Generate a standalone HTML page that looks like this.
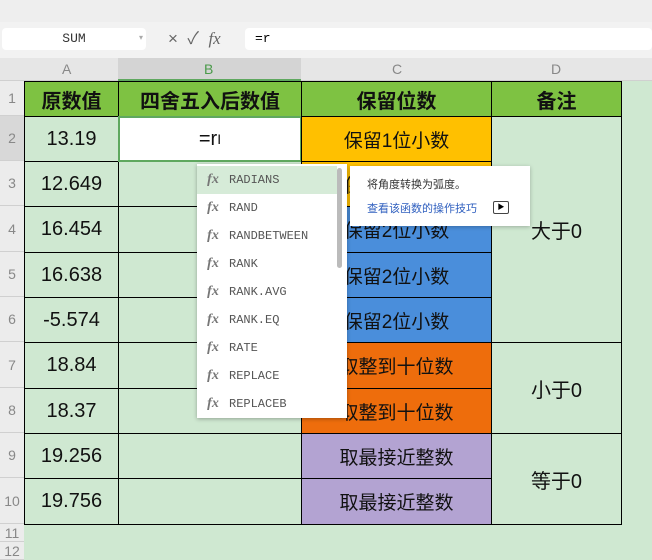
<!DOCTYPE html><html><head><meta charset="utf-8"><style>
body{margin:0;width:652px;height:552px;overflow:hidden;background:#cfe8d1;font-family:"Liberation Sans","Noto Sans CJK SC",sans-serif;position:relative}
div{position:absolute;box-sizing:border-box}
.c{display:flex;align-items:center;justify-content:center;border:1px solid #000;font-size:20px;color:#111}
.h{background:#7ec242;font-weight:bold}
.rh{left:0;width:24px;color:#888;font-size:14px;display:flex;align-items:center;justify-content:center;background:#ececec;border-bottom:1px solid #d0d0d0}
.it{left:0;width:140px;height:28px;display:flex;align-items:center;font-family:"Liberation Mono",monospace;font-size:12px;color:#555}
.it i{font-family:"Liberation Serif",serif;font-weight:bold;color:#777;font-size:14px;width:32px;text-align:center}
</style></head><body>
<div style="left:0;top:0;width:652px;height:22px;background:#eee"></div>
<div style="left:0;top:22px;width:652px;height:36px;background:#f2f2f2"></div>
<div style="left:2px;top:28px;width:144px;height:22px;background:#fff;border-radius:4px;font-family:'Liberation Mono',monospace;font-size:13px;color:#333;text-align:center;line-height:22px">SUM<span style="position:absolute;right:3px;color:#aaa;font-size:8px">▾</span></div>
<div style="left:168px;top:28px;font-size:17px;color:#666;line-height:22px">×&nbsp;&nbsp;✓&nbsp;&nbsp;<i style="font-family:'Liberation Serif',serif">fx</i></div>
<div style="left:245px;top:28px;width:407px;height:22px;background:#fff;border-radius:4px;font-family:'Liberation Mono',monospace;font-size:13px;line-height:22px;padding-left:10px">=r</div>
<div style="left:0;top:58px;width:652px;height:23px;background:#e6e6e6;border-bottom:1px solid #d0d0d0"></div>
<div style="left:118px;top:58px;width:183px;height:23px;background:#d4d4d4;border-bottom:2px solid #5fa85f"></div>
<div style="left:62px;top:58px;color:#888;font-size:14px;line-height:23px">A</div>
<div style="left:204px;top:58px;color:#4a9a4a;font-size:14px;line-height:23px">B</div>
<div style="left:392px;top:58px;color:#888;font-size:14px;line-height:23px">C</div>
<div style="left:551px;top:58px;color:#888;font-size:14px;line-height:23px">D</div>
<div class="rh" style="top:81px;height:35px">1</div>
<div class="rh" style="top:116px;height:45px;background:#d8d8d8">2</div>
<div class="rh" style="top:161px;height:45px">3</div>
<div class="rh" style="top:206px;height:46px">4</div>
<div class="rh" style="top:252px;height:45px">5</div>
<div class="rh" style="top:297px;height:45px">6</div>
<div class="rh" style="top:342px;height:46px">7</div>
<div class="rh" style="top:388px;height:45px">8</div>
<div class="rh" style="top:433px;height:45px">9</div>
<div class="rh" style="top:478px;height:46px">10</div>
<div class="rh" style="top:524px;height:18px">11</div>
<div class="rh" style="top:542px;height:18px">12</div>
<div class="c h" style="left:24px;top:81px;width:95px;height:36px">原数值</div>
<div class="c h" style="left:118px;top:81px;width:184px;height:36px">四舍五入后数值</div>
<div class="c h" style="left:301px;top:81px;width:191px;height:36px">保留位数</div>
<div class="c h" style="left:491px;top:81px;width:131px;height:36px">备注</div>
<div class="c" style="left:24px;top:116px;width:95px;height:46px">13.19</div>
<div class="c" style="left:24px;top:161px;width:95px;height:46px">12.649</div>
<div class="c" style="left:24px;top:206px;width:95px;height:47px">16.454</div>
<div class="c" style="left:24px;top:252px;width:95px;height:46px">16.638</div>
<div class="c" style="left:24px;top:297px;width:95px;height:46px">-5.574</div>
<div class="c" style="left:24px;top:342px;width:95px;height:47px">18.84</div>
<div class="c" style="left:24px;top:388px;width:95px;height:46px">18.37</div>
<div class="c" style="left:24px;top:433px;width:95px;height:46px">19.256</div>
<div class="c" style="left:24px;top:478px;width:95px;height:47px">19.756</div>
<div class="c" style="left:118px;top:161px;width:184px;height:46px"></div>
<div class="c" style="left:118px;top:206px;width:184px;height:47px"></div>
<div class="c" style="left:118px;top:252px;width:184px;height:46px"></div>
<div class="c" style="left:118px;top:297px;width:184px;height:46px"></div>
<div class="c" style="left:118px;top:342px;width:184px;height:47px"></div>
<div class="c" style="left:118px;top:388px;width:184px;height:46px"></div>
<div class="c" style="left:118px;top:433px;width:184px;height:46px"></div>
<div class="c" style="left:118px;top:478px;width:184px;height:47px"></div>
<div class="c" style="left:118px;top:116px;width:184px;height:46px;background:#fff;border:2px solid #5fa85f">=r<span style="font-size:14px">I</span></div>
<div class="c" style="left:301px;top:116px;width:191px;height:46px;background:#ffc000;font-size:19px">保留1位小数</div>
<div class="c" style="left:301px;top:161px;width:191px;height:46px;background:#ffc000;font-size:19px">保留1位小数</div>
<div class="c" style="left:301px;top:206px;width:191px;height:47px;background:#4a8edb;font-size:19px">保留2位小数</div>
<div class="c" style="left:301px;top:252px;width:191px;height:46px;background:#4a8edb;font-size:19px">保留2位小数</div>
<div class="c" style="left:301px;top:297px;width:191px;height:46px;background:#4a8edb;font-size:19px">保留2位小数</div>
<div class="c" style="left:301px;top:342px;width:191px;height:47px;background:#ee6d0c;font-size:19px">取整到十位数</div>
<div class="c" style="left:301px;top:388px;width:191px;height:46px;background:#ee6d0c;font-size:19px">取整到十位数</div>
<div class="c" style="left:301px;top:433px;width:191px;height:46px;background:#b3a3d2;font-size:19px">取最接近整数</div>
<div class="c" style="left:301px;top:478px;width:191px;height:47px;background:#b3a3d2;font-size:19px">取最接近整数</div>
<div class="c" style="left:491px;top:116px;width:131px;height:227px">大于0</div>
<div class="c" style="left:491px;top:342px;width:131px;height:92px">小于0</div>
<div class="c" style="left:491px;top:433px;width:131px;height:92px">等于0</div>
<div style="left:197px;top:164px;width:150px;height:254px;background:#fff;box-shadow:0 1px 4px rgba(0,0,0,.3)">
<div class="it" style="top:2px;background:#d6ebd8"><i>fx</i>RADIANS</div>
<div class="it" style="top:30px"><i>fx</i>RAND</div>
<div class="it" style="top:58px"><i>fx</i>RANDBETWEEN</div>
<div class="it" style="top:86px"><i>fx</i>RANK</div>
<div class="it" style="top:114px"><i>fx</i>RANK.AVG</div>
<div class="it" style="top:142px"><i>fx</i>RANK.EQ</div>
<div class="it" style="top:170px"><i>fx</i>RATE</div>
<div class="it" style="top:198px"><i>fx</i>REPLACE</div>
<div class="it" style="top:226px"><i>fx</i>REPLACEB</div>
<div style="left:140px;top:4px;width:5px;height:100px;background:#bbb;border-radius:3px"></div>
</div>
<div style="left:350px;top:166px;width:180px;height:60px;background:#fff;box-shadow:0 1px 4px rgba(0,0,0,.25)">
<div style="left:17px;top:10px;font-size:11px;color:#333">将角度转换为弧度。</div>
<div style="left:17px;top:34px;font-size:11px;color:#2f5fbf">查看该函数的操作技巧</div>
<div style="left:143px;top:35px;width:16px;height:13px;border:1px solid #444;border-radius:2px;font-size:7px;text-align:center;line-height:11px">▶</div>
</div>
</body></html>
